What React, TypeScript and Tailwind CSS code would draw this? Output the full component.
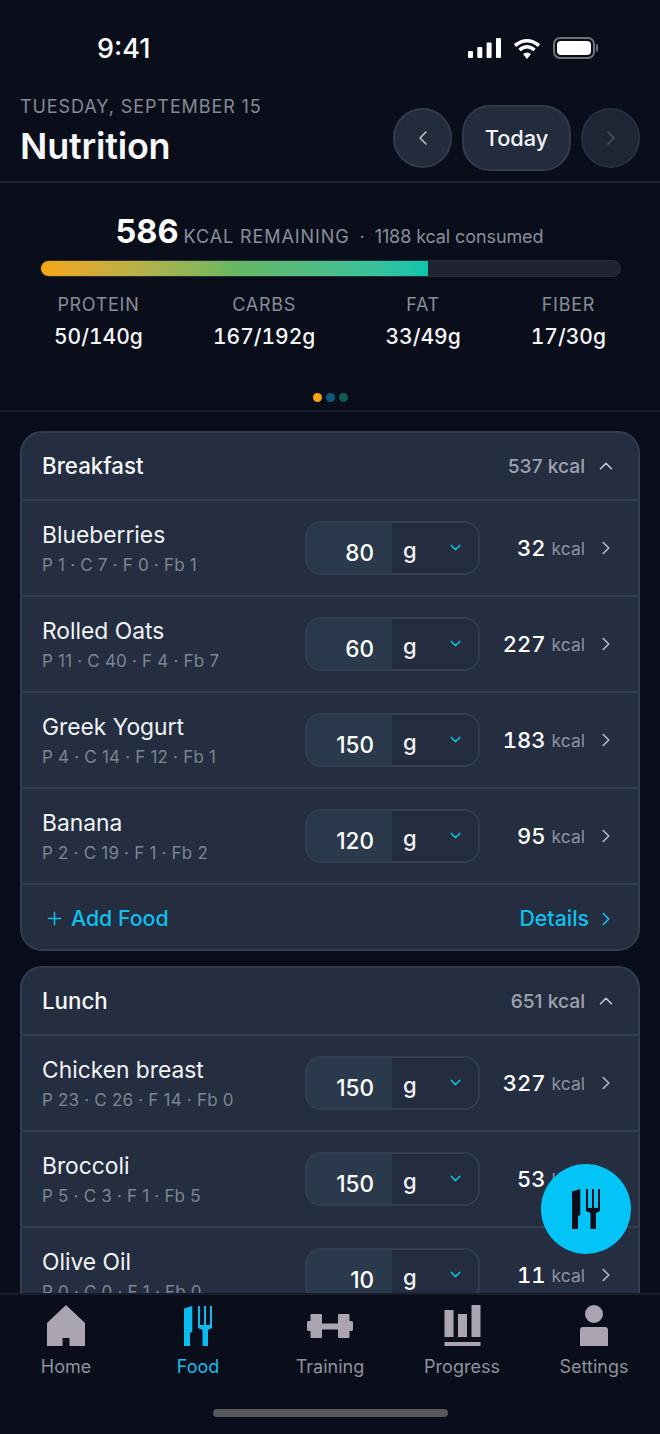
import { ChevronDown, ChevronLeft, ChevronRight, ChevronUp, Plus } from "lucide-react";

type Food = { name: string; macros: string; qty: number; kcal: number };

const breakfast: Food[] = [
	{ name: "Blueberries", macros: "P 1 · C 7 · F 0 · Fb 1", qty: 80, kcal: 32 },
	{ name: "Rolled Oats", macros: "P 11 · C 40 · F 4 · Fb 7", qty: 60, kcal: 227 },
	{ name: "Greek Yogurt", macros: "P 4 · C 14 · F 12 · Fb 1", qty: 150, kcal: 183 },
	{ name: "Banana", macros: "P 2 · C 19 · F 1 · Fb 2", qty: 120, kcal: 95 },
];

const lunch: Food[] = [
	{ name: "Chicken breast", macros: "P 23 · C 26 · F 14 · Fb 0", qty: 150, kcal: 327 },
	{ name: "Broccoli", macros: "P 5 · C 3 · F 1 · Fb 5", qty: 150, kcal: 53 },
	{ name: "Olive Oil", macros: "P 0 · C 0 · F 1 · Fb 0", qty: 10, kcal: 11 },
];

const macros = [
	{ label: "PROTEIN", value: "50/140g" },
	{ label: "CARBS", value: "167/192g" },
	{ label: "FAT", value: "33/49g" },
	{ label: "FIBER", value: "17/30g" },
];

function CutleryIcon({ className }: { className?: string }) {
	return (
		<svg viewBox="0 0 28 40" className={className} fill="currentColor">
			<path d="M0 2.500 L8.300 0 V26 L6 27 V40 H0 Z" />
			<path d="M14 0 H16 V19 H20 V0 H22 V19 H26 V0 H28 V22 L24 24 V40 H18.500 V24 L14 22 Z" />
		</svg>
	);
}

function Row({ food }: { food: Food }) {
	return (
		<div className="flex h-[96px] items-center border-t-2 border-[#323e50] pl-[20px] pr-[21px]">
			<div className="mt-[1px] w-[263px]">
				<div className="text-[22.800px] leading-[30px] text-[#f1f3f6]">{food.name}</div>
				<div className="mt-[3px] text-[17px] leading-[24px] tracking-[0.2px] text-[#7d8492]">{food.macros}</div>
			</div>
			<div className="flex h-[54px] w-[175px] overflow-hidden rounded-[16px] border-2 border-[#333f51]">
				<div className="flex w-[85px] items-center justify-end bg-[#2b394c] pr-[18px] pt-[10px] text-[22.500px] font-medium text-white">
					{food.qty}
				</div>
				<div className="flex flex-1 items-center justify-between bg-[#232d3f] pl-[11px] pr-[14px] text-[22px] font-medium text-[#f1f3f6]">
					<span className="mt-[4px]">g</span>
					<ChevronDown size={17} strokeWidth={2} className="mb-[1px] text-[#1cb4de]" />
				</div>
			</div>
			<div className="ml-auto flex items-center">
				<span className="text-[22px] font-medium tabular-nums text-white">{food.kcal}</span>
				<span className="ml-[6px] mr-[10px] mt-[2px] text-[17.500px] text-[#8d93a0]">kcal</span>
				<ChevronRight size={22} strokeWidth={1.75} className="text-[#b4b8c0]" />
			</div>
		</div>
	);
}

function Meal({ title, kcal, foods, footer }: { title: string; kcal: number; foods: Food[]; footer?: boolean }) {
	return (
		<section className="rounded-[22px] border-2 border-[#323e50] bg-[#242e40]">
			<div className="flex h-[66px] items-center justify-between pl-[20px] pr-[21px]">
				<span className="text-[22.300px] font-medium text-[#f5f6f8]">{title}</span>
				<span className="flex items-center gap-[10px] text-[19.200px] font-medium text-[#9ea2ae]">
					{kcal} kcal
					<ChevronUp size={22} strokeWidth={1.75} className="text-[#c6c9cf]" />
				</span>
			</div>
			{foods.map((food) => (
				<Row key={food.name} food={food} />
			))}
			{footer && (
				<div className="flex h-[66px] items-center justify-between border-t-2 border-[#323e50] pl-[22px] pr-[21px] pt-[3px] text-[21.300px] font-medium text-[#12bfeb]">
					<span className="flex items-center gap-[6px]">
						<Plus size={21} strokeWidth={1.75} />
						Add Food
					</span>
					<span className="flex items-center gap-[6px]">
						Details
						<ChevronRight size={22} strokeWidth={1.75} />
					</span>
				</div>
			)}
		</section>
	);
}

function StatusBar() {
	return (
		<div className="flex h-[96px] items-start justify-between pl-[97px] pr-[62px] pt-[32px] text-white">
			<span className="text-[27px] font-medium leading-[34px]">9:41</span>
			<div className="mt-[5px] flex items-center gap-[12px]">
				<svg width="33" height="20" viewBox="0 0 33 20" fill="currentColor">
					<rect x="0" y="13" width="5" height="7" rx="1" />
					<rect x="9.300" y="9" width="5" height="11" rx="1" />
					<rect x="18.600" y="4.500" width="5" height="15.500" rx="1" />
					<rect x="28" y="0" width="5" height="20" rx="1" />
				</svg>
				<svg width="28" height="21" viewBox="0 0 28 21" fill="none" stroke="currentColor" strokeWidth="3.600">
					<path d="M2 7.500 Q14 -2 26 7.500" />
					<path d="M6.500 12 Q14 5.500 21.500 12" />
					<path d="M14 21 L10 16 Q14 13 18 16 Z" fill="currentColor" stroke="none" />
				</svg>
				<div className="flex items-center">
					<div className="h-[22px] w-[42px] rounded-[7px] border-2 border-[#6d717b] p-[2px]">
						<div className="h-full rounded-[4px] bg-white" />
					</div>
					<div className="ml-[1px] h-[8px] w-[2px] rounded-r-full bg-[#6d717b]" />
				</div>
			</div>
		</div>
	);
}

function Header() {
	return (
		<header className="flex h-[87px] shrink-0 items-start justify-between border-b-2 border-[#1a202c] px-[20px]">
			<div>
				<div className="text-[18px] leading-[22px] tracking-[0.9px] text-[#858a96]">TUESDAY, SEPTEMBER 15</div>
				<h1 className="mt-[6px] text-[36px] font-semibold leading-[44px] tracking-[-0.2px] text-[#f7f8fa]">Nutrition</h1>
			</div>
			<div className="mt-[9px] flex items-center gap-[10px]">
				<button className="flex h-[60px] w-[59px] items-center justify-center rounded-full border-2 border-[#313b4b] bg-[#232c3c] text-[#c2c6cd]">
					<ChevronLeft size={24} strokeWidth={1.5} />
				</button>
				<button className="h-[66px] w-[109px] rounded-[28px] border-2 border-[#313b4b] bg-[#232c3c] text-[21.800px] font-medium text-[#f1f3f6]">
					Today
				</button>
				<button className="flex h-[60px] w-[59px] items-center justify-center rounded-full border-2 border-[#273040] bg-[#1e2635] text-[#4a5261]">
					<ChevronRight size={24} strokeWidth={1.5} />
				</button>
			</div>
		</header>
	);
}

function Summary() {
	return (
		<section className="flex h-[229px] shrink-0 flex-col border-b-2 border-[#171c28] pl-[40px] pr-[39px]">
			<div className="mt-[27px] flex h-[44px] items-baseline justify-center pr-[2px]">
				<span className="text-[32.500px] font-bold leading-[44px] text-white">586</span>
				<span className="ml-[5px] text-[18px] tracking-[0.9px] text-[#8a8f9c]">KCAL REMAINING</span>
				<span className="mx-[10px] text-[18px] text-[#8a8f9c]">·</span>
				<span className="text-[18px] tracking-[-0.1px] text-[#8a8f9c]">1188 kcal consumed</span>
			</div>
			<div className="mt-[6px] h-[17px] overflow-hidden rounded-full border border-[#262d39] bg-[#1e2430]">
				<div className="h-full w-[387px] bg-gradient-to-r from-[#f5a50f] via-[#66b862] to-[#09c4ae]" />
			</div>
			<div className="mt-[16px] flex justify-between pl-[14px] pr-[15px]">
				{macros.map((macro) => (
					<div key={macro.label} className="text-center">
						<div className="text-[18px] leading-[24px] tracking-[0.7px] text-[#878c98]">{macro.label}</div>
						<div className="mt-[6px] text-[21px] font-medium leading-[28px] tabular-nums text-[#f5f6f8]">{macro.value}</div>
					</div>
				))}
			</div>
			<div className="mt-[42px] flex justify-center gap-[4px]">
				<span className="h-[9px] w-[9px] rounded-full bg-[#f5a50f]" />
				<span className="h-[9px] w-[9px] rounded-full bg-[#0c5a80]" />
				<span className="h-[9px] w-[9px] rounded-full bg-[#0d5c50]" />
			</div>
		</section>
	);
}

function TabIcon({ tab }: { tab: string }) {
	if (tab === "Home") {
		return (
			<svg width="38" height="41" viewBox="0 0 38 41" fill="currentColor">
				<path d="M19 0 L38 18 V41 H22.500 V33 H15.500 V41 H0 V18 Z" />
			</svg>
		);
	}
	if (tab === "Food") return <CutleryIcon className="h-[40px] w-[28px]" />;
	if (tab === "Training") {
		return (
			<svg width="46" height="24" viewBox="0 0 46 24" fill="currentColor">
				<path d="M0 8 L1 7 H3.500 V1 Q3.500 0 4.500 0 H14 Q15 0 15 1 V9.500 H31 V1 Q31 0 32 0 H41.500 Q42.500 0 42.500 1 V7 H45 L46 8 V16 L45 17 H42.500 V23 Q42.500 24 41.500 24 H32 Q31 24 31 23 V15.500 H15 V23 Q15 24 14 24 H4.500 Q3.500 24 3.500 23 V17 H1 L0 16 Z" />
			</svg>
		);
	}
	if (tab === "Progress") {
		return (
			<svg width="37" height="41" viewBox="0 0 37 41" fill="currentColor">
				<rect x="0.500" y="5" width="9" height="27" />
				<rect x="14" y="9" width="9" height="23" />
				<rect x="27.500" y="0" width="9" height="32" />
				<rect x="0.500" y="37" width="36" height="4" />
			</svg>
		);
	}
	return (
		<svg width="28" height="41" viewBox="0 0 28 41" fill="currentColor">
			<circle cx="14" cy="9" r="9" />
			<path d="M3 22 H25 Q28 22 28 25 V41 H0 V25 Q0 22 3 22 Z" />
		</svg>
	);
}

function TabBar() {
	const tabs = ["Home", "Food", "Training", "Progress", "Settings"];
	return (
		<nav className="flex h-[141px] shrink-0 flex-col border-t-2 border-[#181d29] bg-[#0a0e1a]">
			<div className="flex">
				{tabs.map((tab) => (
					<div key={tab} className={`flex w-[132px] flex-col items-center ${tab === "Food" ? "text-[#0bbcf0]" : "text-[#aaa5b1]"}`}>
						<div className="flex h-[51px] items-center justify-center pt-[10px]">
							<TabIcon tab={tab} />
						</div>
						<span className={`mt-[9px] text-[18px] leading-[24px] ${tab === "Food" ? "text-[#12bfeb]" : "text-[#8f929b]"}`}>{tab}</span>
					</div>
				))}
			</div>
			<div className="mx-auto mt-[30px] h-[8px] w-[235px] rounded-full bg-[#56585a]" />
		</nav>
	);
}

export default function App() {
	return (
		<div className="relative flex h-[1434px] w-[660px] flex-col overflow-hidden bg-[#0a0e1a] font-['Inter',sans-serif]">
			<StatusBar />
			<Header />
			<Summary />
			<main className="min-h-0 flex-1 overflow-hidden px-[20px] pt-[19px]">
				<div className="flex flex-col gap-[15px]">
					<Meal title="Breakfast" kcal={537} foods={breakfast} footer />
					<Meal title="Lunch" kcal={651} foods={lunch} />
				</div>
			</main>
			<TabBar />
			<button className="absolute left-[541px] top-[1164px] flex h-[90px] w-[90px] items-center justify-center rounded-full bg-[#03c4f6] text-[#0a0e1a]">
				<CutleryIcon className="h-[40px] w-[28px]" />
			</button>
		</div>
	);
}
